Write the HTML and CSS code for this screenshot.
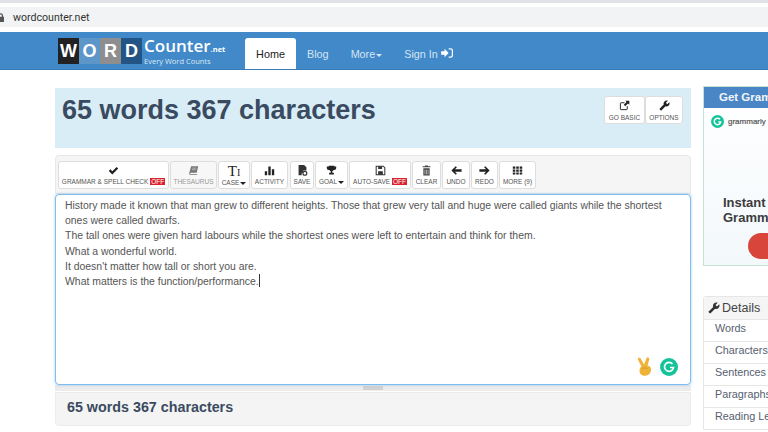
FILE: index.html
```html
<!DOCTYPE html>
<html>
<head>
  <title>Word Counter</title>
  <link rel="stylesheet" href="styles.css">
</head>
<body>
  <div class="browser-top"></div>
  <div class="address">
    <svg class="lock" viewBox="0 0 8 10"><path d="M1 4V3a3 3 0 0 1 6 0v1h1v6H0V4zm1.500 0h3V3a1.500 1.500 0 0 0-3 0z"/></svg>
    <span>wordcounter.net</span>
  </div>

  <nav class="navbar">
    <div class="logo">
      <span class="tile tile-black">W</span>
      <span class="tile tile-blue">O</span>
      <span class="tile tile-grey">R</span>
      <span class="tile tile-navy">D</span>
      <div class="logo-text">
        <div class="logo-name">Counter<small>.net</small></div>
        <div class="logo-tag">Every Word Counts</div>
      </div>
    </div>
    <a class="nav-link active">Home</a>
    <a class="nav-link">Blog</a>
    <a class="nav-link">More<i class="caret"></i></a>
    <a class="nav-link">Sign In
      <svg class="signin" viewBox="0 0 14 12"><path d="M0 4h4V1l5 5-5 5V8H0z"/><path d="M9 1h2.500A2 2 0 0 1 13.500 3v6a2 2 0 0 1-2 2H9" fill="none" stroke="#fff" stroke-width="1.500"/></svg>
    </a>
  </nav>

  <div class="page">
    <main class="left">
      <section class="title-box">
        <h1>65 words 367 characters</h1>
        <div class="title-btns">
          <div class="tbtn tbtn-basic">
            <svg viewBox="0 0 16 16"><path d="M12 9v4a1 1 0 0 1-1 1H3a1 1 0 0 1-1-1V5a1 1 0 0 1 1-1h5" fill="none" stroke="#222" stroke-width="1.400"/><path d="M9 1h6v6l-2-2-4 4-2-2 4-4z" fill="#222"/></svg>
            GO BASIC
          </div>
          <div class="tbtn tbtn-options">
            <svg viewBox="0 0 24 24"><path transform="matrix(-1 0 0 1 24 0)" d="M22.700 19l-9.100-9.100c.9-2.300.4-5-1.500-6.900-2-2-5-2.400-7.400-1.300L9 6 6 9 1.600 4.700C.4 7.100.9 10.100 2.900 12.100c1.900 1.900 4.600 2.400 6.900 1.500l9.100 9.100c.4.4 1 .4 1.400 0l2.300-2.300c.5-.4.5-1.100.1-1.400z" fill="#222"/></svg>
            OPTIONS
          </div>
        </div>
      </section>

      <section class="toolbar">
        <div class="btn btn-grammar">
          <svg viewBox="0 0 14 12"><path d="M1 6.500 3 4.500l2.500 2.500L11 1.500l2 2-7.500 7.500z" fill="#222"/></svg>
          <span>GRAMMAR &amp; SPELL CHECK <b class="off">OFF</b></span>
        </div>
        <div class="btn btn-thes muted">
          <svg viewBox="0 0 14 12"><path d="M4 .5h9L11 9H3.500a.8.8 0 0 0 0 1.600H11.500L11.300 11.500H3A1.600 1.600 0 0 1 1.500 9.500z" fill="#777"/><path d="M5.500 3h5M5 5h5" stroke="#f7f7f7" stroke-width=".6"/></svg>
          <span>THESAURUS</span>
        </div>
        <div class="btn btn-case">
          <span class="case-glyph">T<small>I</small></span>
          <span>CASE<i class="caret dark"></i></span>
        </div>
        <div class="btn btn-act">
          <svg viewBox="0 0 14 12"><path d="M1 7h3v5H1zM5.500 1h3v11h-3zM10 4.500h3V12h-3z" fill="#222"/></svg>
          <span class="label-low">ACTIVITY</span>
        </div>
        <div class="btn btn-save">
          <svg viewBox="0 0 14 14"><path d="M2 0h7l3 3v4H8v3H6v3H2z" fill="#333"/><circle cx="10" cy="10.500" r="2.500" fill="none" stroke="#333" stroke-width="1.500"/></svg>
          <span class="label-low">SAVE</span>
        </div>
        <div class="btn btn-goal">
          <svg viewBox="0 0 14 12"><path d="M3.500 0h7v1H13v2a3 3 0 0 1-3 2.500L8 7v2h2v2H4V9h2V7L4 5.500A3 3 0 0 1 1 3V1h2.500z" fill="#222"/></svg>
          <span>GOAL<i class="caret dark"></i></span>
        </div>
        <div class="btn btn-auto">
          <svg viewBox="0 0 14 14"><path d="M1.500 1.500h9l2 2v9h-11z" fill="none" stroke="#333" stroke-width="1.300"/><path d="M4 1.500h5v3.500H4zM4 8h6v4.500H4z" fill="#333"/></svg>
          <span>AUTO-SAVE <b class="off">OFF</b></span>
        </div>
        <div class="btn btn-clear">
          <svg viewBox="0 0 12 14"><path d="M4 1.500V.5h4v1h3v1.500H1V1.500zM2 4h8v9.500H2z" fill="#444"/><path d="M4 6v6M6 6v6M8 6v6" stroke="#fff" stroke-width=".7"/></svg>
          <span>CLEAR</span>
        </div>
        <div class="btn btn-undo">
          <svg viewBox="0 0 14 12"><path d="M6 .5 7.500 2 5 4.500h8.500v3H5L7.500 10 6 11.500.5 6z" fill="#222"/></svg>
          <span>UNDO</span>
        </div>
        <div class="btn btn-redo">
          <svg viewBox="0 0 14 12"><path d="M8 .5 6.500 2 9 4.500H.5v3H9L6.500 10 8 11.500 13.500 6z" fill="#222"/></svg>
          <span>REDO</span>
        </div>
        <div class="btn btn-more">
          <svg viewBox="0 0 14 12"><path d="M1 1h3.200v2.800H1zM5.400 1h3.200v2.800H5.400zM9.800 1H13v2.800H9.800zM1 4.700h3.200v2.800H1zM5.400 4.700h3.200v2.800H5.400zM9.800 4.700H13v2.800H9.800zM1 8.400h3.200v2.800H1zM5.400 8.400h3.200v2.800H5.400zM9.800 8.400H13v2.800H9.800z" fill="#222"/></svg>
          <span>MORE (9)</span>
        </div>
      </section>

      <section class="editor">
        <p>History made it known that man grew to different heights. Those that grew very tall and huge were called giants while the shortest ones were called dwarfs.</p>
        <p>The tall ones were given hard labours while the shortest ones were left to entertain and think for them.</p>
        <p>What a wonderful world.</p>
        <p>It doesn't matter how tall or short you are.</p>
        <p>What matters is the function/performance.<span class="cursor"></span></p>
        <div class="editor-icons">
          <svg class="peace" viewBox="0 0 16 19"><path d="M4.500 9.500 1 2.800a1.500 1.500 0 0 1 2.700-1.300L7 7.500 9.500 1.200a1.500 1.500 0 0 1 2.800 1L10.500 8.500c2.200.3 3.500 1.500 3.500 4 0 3.800-2.400 6.200-6 6.200-3.200 0-5.500-2-5.500-5 0-2 .7-3.400 2-4.200z" fill="#f0b33a"/><path d="M5 11.500c1.500-.8 3.500-.8 5.500 0" fill="none" stroke="#c98a1c" stroke-width=".7"/></svg>
          <svg class="gcircle" viewBox="0 0 18 18"><circle cx="9" cy="9" r="9" fill="#15c39a"/><path d="M12.500 6A4.500 4.500 0 1 0 13.500 9.500H10" fill="none" stroke="#fff" stroke-width="1.700"/></svg>
        </div>
      </section>
      <div class="resizer"><i></i></div>
      <section class="summary">65 words 367 characters</section>
    </main>

    <aside class="right">
      <section class="ad">
        <div class="ad-head">Get Grammarly</div>
        <div class="ad-brand">
          <svg viewBox="0 0 18 18"><circle cx="9" cy="9" r="9" fill="#15c39a"/><path d="M12.500 6A4.500 4.500 0 1 0 13.500 9.500H10" fill="none" stroke="#fff" stroke-width="2"/></svg>
          <span>grammarly</span>
        </div>
        <div class="ad-copy">Instant<br>Grammar</div>
        <div class="ad-cta"></div>
      </section>
      <section class="details">
        <div class="details-head">
          <svg viewBox="0 0 24 24"><path transform="matrix(-1 0 0 1 24 0)" d="M22.700 19l-9.100-9.100c.9-2.300.4-5-1.500-6.900-2-2-5-2.400-7.400-1.300L9 6 6 9 1.600 4.700C.4 7.100.9 10.100 2.900 12.100c1.900 1.900 4.600 2.400 6.900 1.500l9.100 9.100c.4.4 1 .4 1.400 0l2.300-2.300c.5-.4.500-1.100.1-1.400z" fill="#333"/></svg>
          Details
        </div>
        <div class="row">Words</div>
        <div class="row">Characters</div>
        <div class="row">Sentences</div>
        <div class="row">Paragraphs</div>
        <div class="row">Reading Level</div>
      </section>
    </aside>
  </div>
</body>
</html>
```

FILE: styles.css
```css
* {
  box-sizing: border-box;
}
html, body {
  margin: 0;
  height: 432px;
  overflow: hidden;
}
body {
  background-color: #fff;
  font-family: "Liberation Sans", Arial, sans-serif;
  color: #555;
}
.browser-top {
  height: 3px;
  background-color: #e0e2e8;
  margin-bottom: 4px;
}
.address {
  height: 20px;
  background-color: #f1f3f4;
  display: flex;
  align-items: center;
  font-family: Roboto, sans-serif;
  font-size: 10.600px;
  color: #333;
  margin-bottom: 5px;
}
.lock {
  width: 7px;
  height: 9px;
  fill: #555;
  margin-left: -3px;
  margin-right: 9px;
}

/* nav */
.navbar {
  height: 38px;
  background-color: #4189c9;
  border-bottom: 1px solid #3a7cb8;
  display: flex;
  align-items: flex-end;
  padding-left: 58px;
}
.logo {
  display: flex;
  align-self: flex-start;
  margin-top: 6px;
  width: 187px;
}
.tile {
  width: 21px;
  height: 26px;
  display: block;
  color: #fff;
  font-weight: bold;
  font-size: 18px;
  line-height: 26px;
  text-align: center;
}
.tile-black {
  background-color: #222;
}
.tile-blue {
  background-color: #5d97ca;
}
.tile-grey {
  background-color: #8e8e8e;
}
.tile-navy {
  background-color: #225585;
}
.logo-text {
  color: #fff;
  margin-left: 2px;
}
.logo-name {
  font-family: "Open Sans", sans-serif;
  font-size: 17px;
  line-height: 16px;
  font-weight: 600;
}
.logo-name small {
  font-size: 7.500px;
  font-weight: bold;
}
.logo-tag {
  font-family: "Open Sans", sans-serif;
  font-size: 7.500px;
  line-height: 8px;
  color: #dce8f3;
}
.nav-link {
  height: 31px;
  padding: 0 11px;
  font-size: 10.800px;
  line-height: 32px;
  color: #d5e5f3;
  display: block;
}
.nav-link.active {
  width: 51px;
  background-color: #fff;
  color: #222;
  border-radius: 3px 3px 0 0;
  text-align: center;
  padding: 0;
}
.caret {
  display: inline-block;
  border-top: 3px solid #d5e5f3;
  border-left: 3px solid transparent;
  border-right: 3px solid transparent;
  margin-left: 1px;
  vertical-align: middle;
}
.caret.dark {
  border-top-color: #222;
  border-width: 3px 3px 0;
  margin-left: 1px;
}
.signin {
  width: 12px;
  height: 10px;
  fill: #fff;
}

/* main */
.page {
  display: flex;
  padding-left: 55px;
  width: 900px;
}
.left {
  width: 636px;
  padding-top: 18px;
}
.right {
  width: 170px;
  margin-left: 12px;
  padding-top: 16px;
}
.title-box {
  height: 60px;
  background-color: #d9edf7;
  display: flex;
  justify-content: space-between;
  padding: 8px 8px 0 7px;
}
h1 {
  margin: 0;
  font-size: 27px;
  line-height: 29px;
  color: #3a4a60;
}
.title-btns {
  display: flex;
}
.tbtn {
  height: 28px;
  background-color: #fff;
  border: 1px solid #ddd;
  border-radius: 3px;
  font-size: 6.500px;
  color: #555;
  text-align: center;
  white-space: nowrap;
  padding-top: 3px;
}
.tbtn svg {
  display: block;
  width: 11px;
  height: 11px;
  margin: 0 auto 3px;
}
.tbtn-basic {
  width: 41px;
}
.tbtn-options {
  width: 38px;
}

.toolbar {
  height: 39px;
  margin-top: 7px;
  background-color: #f5f5f5;
  border: 1px solid #e8e8e8;
  border-radius: 4px 4px 0 0;
  display: flex;
  gap: 1px;
  padding: 5px 0 0 2px;
}
.btn {
  height: 28px;
  background-color: #fff;
  border: 1px solid #ddd;
  border-radius: 3px;
  font-size: 6.500px;
  line-height: 8px;
  color: #555;
  text-align: center;
  white-space: nowrap;
  padding-top: 3px;
}
.btn svg {
  display: block;
  width: 11px;
  height: 11px;
  margin: 0 auto 2px;
}
.label-low {
  display: block;
  margin-top: 1px;
}
.muted {
  color: #999;
  background-color: #f7f7f7;
}
.off {
  background-color: #d9232e;
  color: #fff;
  font-weight: normal;
  padding: 0 1px;
}
.case-glyph {
  display: block;
  font-family: "Liberation Serif", serif;
  font-size: 15px;
  line-height: 13px;
  color: #222;
}
.case-glyph small {
  font-size: 10px;
}
.btn-grammar {
  width: 111px;
}
.btn-thes {
  width: 47px;
}
.btn-case {
  width: 32px;
}
.btn-act {
  width: 37px;
}
.btn-save {
  width: 24px;
  margin-left: 1px;
}
.btn-goal {
  width: 33px;
}
.btn-auto {
  width: 62px;
}
.btn-clear {
  width: 29px;
}
.btn-undo {
  width: 28px;
}
.btn-redo {
  width: 27px;
}
.btn-more {
  width: 37px;
}

.editor {
  height: 191px;
  background-color: #fff;
  border: 1px solid #7fbcec;
  border-radius: 4px;
  box-shadow: 0 0 3px rgba(102, 175, 233, 0.6);
  padding: 3px 9px;
  font-size: 10.450px;
  line-height: 15.200px;
  color: #555;
  position: relative;
}
.editor p {
  margin: 0;
}
.cursor {
  display: inline-block;
  width: 1px;
  height: 13px;
  background-color: #333;
  vertical-align: text-bottom;
}
.editor-icons {
  position: absolute;
  right: 12px;
  bottom: 8px;
  display: flex;
  align-items: center;
  gap: 7px;
}
.peace {
  width: 16px;
  height: 19px;
}
.gcircle {
  width: 18px;
  height: 18px;
}
.resizer {
  height: 6px;
  background-color: #ececec;
  display: flex;
  justify-content: center;
  align-items: center;
}
.resizer i {
  display: block;
  width: 20px;
  height: 4px;
  background-color: #d2d2d2;
}
.summary {
  height: 34px;
  margin-top: 1px;
  background-color: #f4f4f4;
  border: 1px solid #ececec;
  border-radius: 0 0 4px 4px;
  padding-left: 11px;
  font-size: 14.300px;
  line-height: 28px;
  font-weight: bold;
  color: #3a4a60;
}

/* sidebar */
.ad {
  height: 180px;
  border: 1px solid #c5e3d5;
  background: linear-gradient(#fff, #f3f8fb);
}
.ad-head {
  height: 21px;
  background-color: #4a86c5;
  color: #f0f5fa;
  font-weight: bold;
  font-size: 11.500px;
  line-height: 20px;
  padding-left: 15px;
  white-space: nowrap;
}
.ad-brand {
  display: flex;
  align-items: center;
  gap: 4px;
  padding: 7px 0 0 7px;
  font-size: 8px;
  -webkit-text-stroke: 0.2px #555;
  color: #555;
}
.ad-brand svg {
  width: 13px;
  height: 13px;
}
.ad-copy {
  margin-top: 67px;
  padding-left: 19px;
  font-size: 13px;
  line-height: 15px;
  font-weight: bold;
  color: #3c3c3c;
  white-space: nowrap;
}
.ad-cta {
  width: 80px;
  height: 26px;
  margin: 8px 0 0 44px;
  background-color: #d8453b;
  border-radius: 13px;
}
.details {
  margin-top: 30px;
  border: 1px solid #e6e6e6;
  border-radius: 3px 3px 0 0;
}
.details-head {
  height: 22px;
  background-color: #f5f5f5;
  font-size: 12.500px;
  line-height: 22px;
  color: #444;
  display: flex;
  align-items: center;
  gap: 2px;
  padding-left: 4px;
}
.details-head svg {
  width: 12px;
  height: 12px;
}
.row {
  height: 22px;
  border-top: 1px solid #e6e6e6;
  padding-left: 11px;
  font-size: 10.800px;
  line-height: 16px;
  color: #565e70;
}
```
